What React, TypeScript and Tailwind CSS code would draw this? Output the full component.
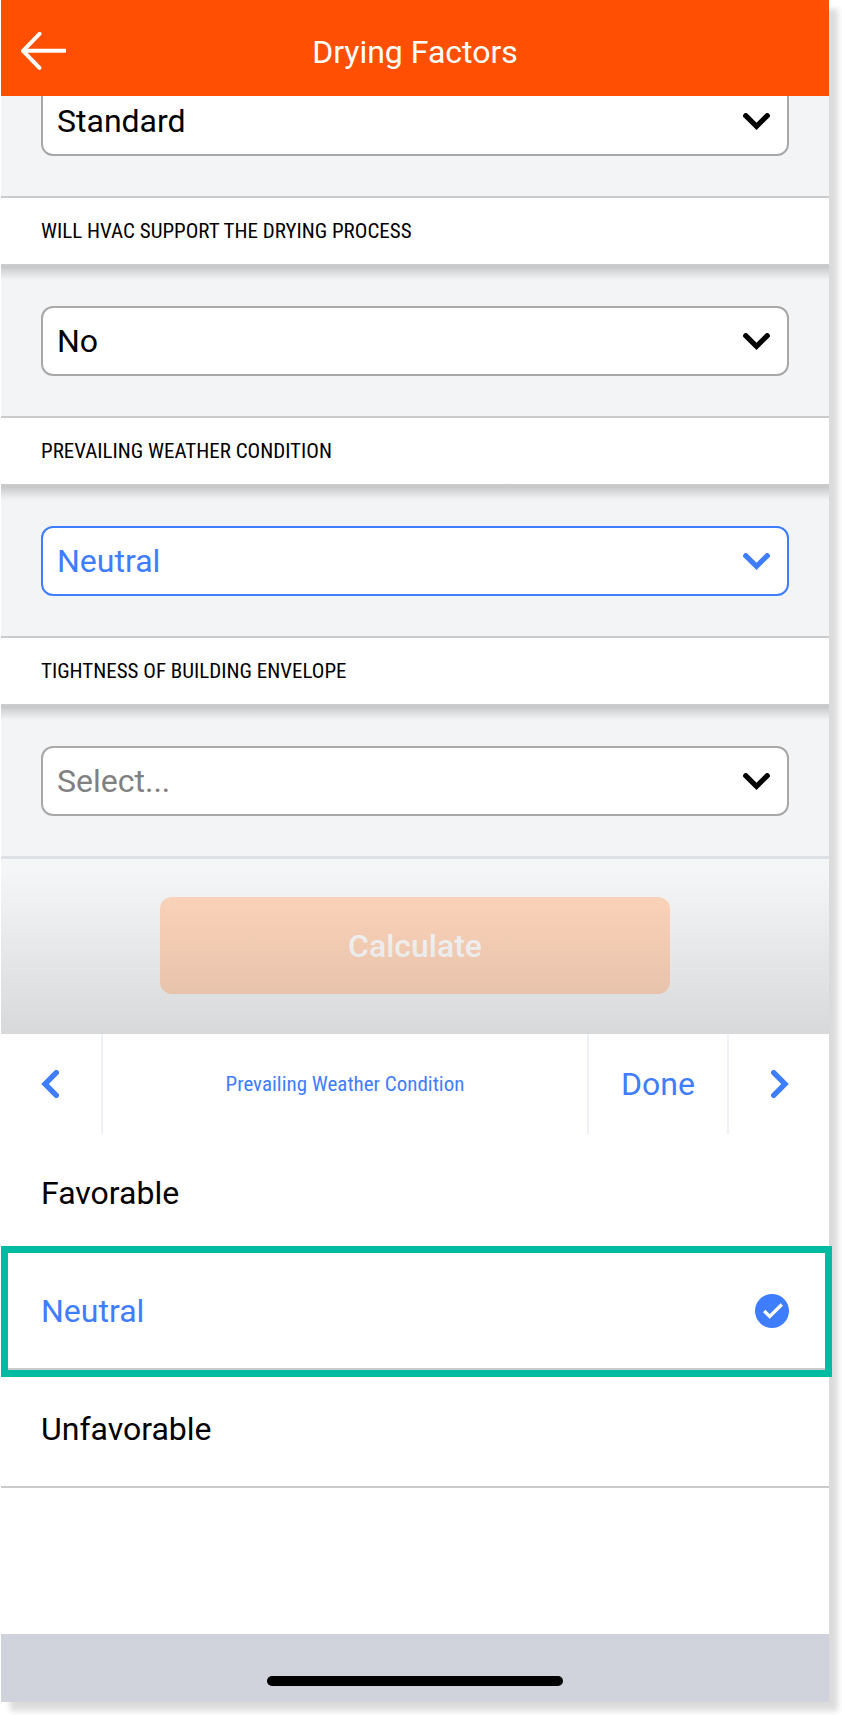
import { useState } from "react";

const WEATHER = ["Favorable", "Neutral", "Unfavorable"];

function ChevronDown() {
  return (
    <svg width="27" height="17" viewBox="0 0 27 17" fill="none" stroke="currentColor" strokeWidth="5.2" strokeLinecap="round" aria-hidden="true">
      <path d="M2.7 2.7 L13.5 13.3 L24.3 2.7" />
    </svg>
  );
}

function ChevronSide({ right = false }: { right?: boolean }) {
  return (
    <svg width="18" height="28" viewBox="0 0 18 28" fill="none" stroke="currentColor" strokeWidth="5.4" strokeLinecap="round" aria-hidden="true">
      <path d={right ? "M2.7 2.7 L14 14 L2.7 25.3" : "M15.3 2.7 L4 14 L15.3 25.3"} />
    </svg>
  );
}

type FieldProps = {
  id: string;
  label?: string;
  value: string;
  options: string[];
  tone?: "normal" | "active" | "empty";
  onChange?: (value: string) => void;
};

const TONES = {
  normal: { box: "border-[#a8a8a8] text-black", icon: "text-black" },
  active: { box: "border-[#3f7dff] text-[#3f7dff]", icon: "text-[#3f7dff]" },
  empty: { box: "border-[#a8a8a8] text-[#808080]", icon: "text-black" },
};

function SelectBox({ id, label, value, options, tone = "normal", onChange }: FieldProps) {
  return (
    <div className="relative">
      <select
        id={id}
        aria-label={label ? undefined : "Drying class"}
        value={value}
        onChange={(e) => onChange?.(e.target.value)}
        className={`block h-[70px] w-full appearance-none rounded-xl border-2 bg-white pr-16 pl-3.5 text-[32px] outline-none ${TONES[tone].box}`}
      >
        {options.map((o) => (
          <option key={o}>{o}</option>
        ))}
      </select>
      <span className={`pointer-events-none absolute inset-y-0 right-[19px] flex items-center ${TONES[tone].icon}`}>
        <ChevronDown />
      </span>
    </div>
  );
}

function Field(props: FieldProps) {
  return (
    <section>
      <div className="flex h-[70px] items-center border-y-2 border-[#cbcbcb] bg-white px-10">
        <label htmlFor={props.id} className="font-['Roboto_Condensed','Roboto',sans-serif] text-[21px] leading-6 uppercase">
          {props.label}
        </label>
      </div>
      <div className="bg-[linear-gradient(to_bottom,#c4c5c7,#dadbdd_6px,#f3f4f6_14px)] p-10">
        <SelectBox {...props} />
      </div>
    </section>
  );
}

export default function App() {
  const [weather, setWeather] = useState("Neutral");

  return (
    <div className="min-h-screen bg-white pr-[13px] pb-[13px] pl-px font-['Roboto',sans-serif] text-[32px] leading-10 text-black">
      <div className="bg-white shadow-[9px_9px_6px_rgba(0,0,0,0.14)]">
        <header className="relative z-10 grid h-24 grid-cols-[1fr_auto_1fr] items-center bg-[#ff4f02] px-5 pt-2 text-white">
          <button type="button" aria-label="Back" className="justify-self-start">
            <svg width="46" height="40" viewBox="0 0 46 40" fill="none" stroke="currentColor" strokeWidth="4" aria-hidden="true">
              <path d="M18.5 1.8 L2 18.8 L18.5 35.8" strokeLinecap="round" strokeLinejoin="round" />
              <path d="M2 18.8 H45" />
            </svg>
          </button>
          <h1>Drying Factors</h1>
        </header>

        <main>
          <div className="overflow-hidden bg-[#f3f4f6] px-10 pb-10">
            <div className="-mt-2.5">
              <SelectBox id="class" value="Standard" options={["Standard"]} />
            </div>
          </div>
          <Field id="hvac" label="Will HVAC support the drying process" value="No" options={["No"]} />
          <Field id="weather" label="Prevailing Weather Condition" value={weather} options={WEATHER} tone="active" onChange={setWeather} />
          <Field id="envelope" label="Tightness of building envelope" value="Select..." options={["Select..."]} tone="empty" />

          <div className="border-t-3 border-[#dce0e4] bg-[#f4f6f8]">
            <div className="relative flex justify-center pt-[38px] pb-10">
              <button type="button" className="h-[97px] w-[510px] rounded-xl bg-[#ffd6bc] font-medium text-[#fbfbfc]">
                Calculate
              </button>
              <div className="pointer-events-none absolute inset-0 bg-linear-to-b from-black/0 from-5% to-black/12" />
            </div>
          </div>
        </main>

        <div className="flex h-[100px] text-[#3f7dff]">
          <button type="button" aria-label="Previous field" className="flex w-[102px] items-center border-r-2 border-[#f0f0f7] pl-10">
            <ChevronSide />
          </button>
          <h2 className="flex flex-1 items-center justify-center font-['Roboto_Condensed','Roboto',sans-serif] text-[21px] leading-6">
            Prevailing Weather Condition
          </h2>
          <button type="button" className="w-[142px] border-x-2 border-[#f0f0f7]">
            Done
          </button>
          <button type="button" aria-label="Next field" className="flex w-[100px] items-center justify-end pr-10">
            <ChevronSide right />
          </button>
        </div>

        <fieldset>
          {WEATHER.map((option) => {
            const selected = option === weather;
            return (
              <label
                key={option}
                className={`relative flex h-[118px] items-center justify-between border-b-2 border-[#cbcbcb] px-10 pt-0.5 ${selected ? "text-[#3f7dff]" : ""}`}
              >
                <input type="radio" name="weather" className="sr-only" checked={selected} onChange={() => setWeather(option)} />
                {option}
                {selected && (
                  <>
                    <svg width="34" height="34" viewBox="0 0 34 34" fill="none" aria-hidden="true">
                      <circle cx="17" cy="17" r="17" fill="#3f7dff" />
                      <path d="M9.2 17 L14.7 22.5 L26.8 10.5" stroke="#fff" strokeWidth="3.2" />
                    </svg>
                    <span className="pointer-events-none absolute -top-1.5 -right-[3px] -bottom-[9px] left-0 z-10 border-7 border-[#00bba3]" />
                  </>
                )}
              </label>
            );
          })}
        </fieldset>

        <footer className="mt-[146px] flex h-[68px] items-end justify-center bg-[#d0d3dc] pb-4">
          <div className="h-2.5 w-[296px] rounded-full bg-black" />
        </footer>
      </div>
    </div>
  );
}
